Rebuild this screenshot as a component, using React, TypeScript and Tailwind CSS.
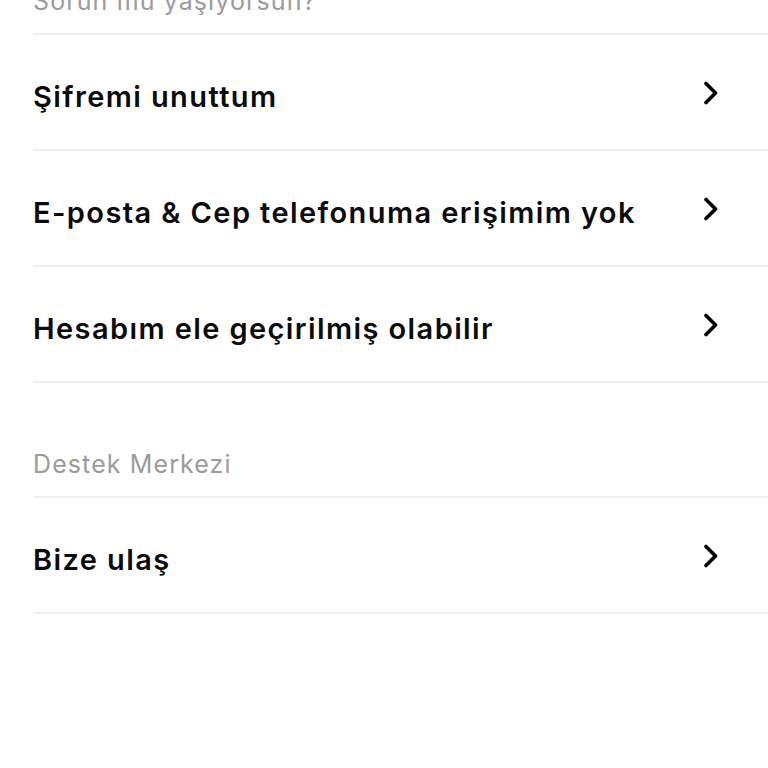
import React from "react";

const Chevron = () => (
  <svg width="16" height="24" viewBox="0 0 16 24" fill="none" className="shrink-0">
    <path d="M3 2.5 L12.5 12 L3 21.5" stroke="#000" strokeWidth="3.6" strokeLinecap="round" strokeLinejoin="round" />
  </svg>
);

const Row = ({ label }: { label: string }) => (
  <div className="flex h-[116px] items-center justify-between border-b-2 border-[#efefef] pr-[49px]">
    <span className="pt-[9px] text-[29px] font-semibold leading-none tracking-[1.4px] text-[#0b0b0b]">{label}</span>
    <div className="pt-[2px]">
      <Chevron />
    </div>
  </div>
);

const Header = ({ label }: { label: string }) => (
  <div className="flex h-[115px] items-end border-b-2 border-[#efefef] pb-[19px]">
    <span className="text-[25px] font-normal leading-none tracking-[1.1px] text-[#9b9b9b]">{label}</span>
  </div>
);

export default function App() {
  return (
    <div className="h-[768px] w-[768px] overflow-hidden bg-white" style={{ fontFamily: "Inter, 'Noto Sans', sans-serif" }}>
      <div className="-mt-[80px] pl-[33px]">
        <Header label="Sorun mu yaşıyorsun?" />
        <Row label="Şifremi unuttum" />
        <Row label="E-posta & Cep telefonuma erişimim yok" />
        <Row label="Hesabım ele geçirilmiş olabilir" />
        <Header label="Destek Merkezi" />
        <Row label="Bize ulaş" />
      </div>
    </div>
  );
}
